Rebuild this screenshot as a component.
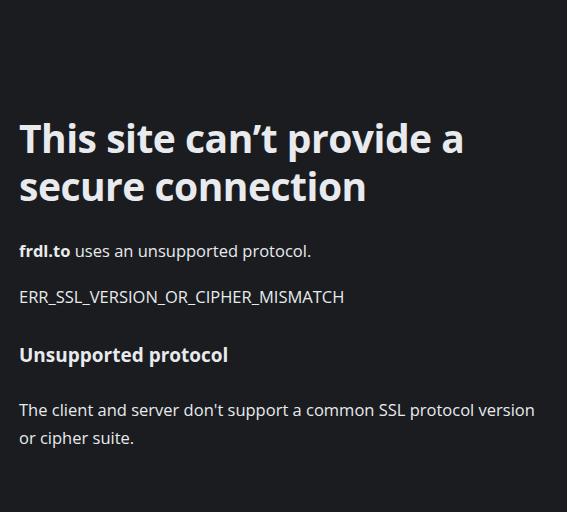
import React from 'react';

export default function App() {
  return (
    <div className="min-h-screen w-full bg-[#1a1c20] text-[#e8eaed] px-[19px] pt-[114px]" style={{ fontFamily: '"Open Sans", "Noto Sans", sans-serif' }}>
      <h1 className="text-[39px] leading-[48px] font-bold tracking-[-0.5px] max-w-[530px]">
        This site can’t provide a secure connection
      </h1>
      <p className="mt-[29px] text-[16.5px] leading-[24px]">
        <strong className="font-bold">frdl.to</strong> uses an unsupported protocol.
      </p>
      <p className="mt-[22px] text-[16.5px] leading-[24px]">ERR_SSL_VERSION_OR_CIPHER_MISMATCH</p>
      <h2 className="mt-[32px] text-[19px] leading-[28px] font-bold">Unsupported protocol</h2>
      <p className="mt-[27px] text-[16.5px] leading-[28px] max-w-[530px]">
        The client and server don't support a common SSL protocol version or cipher suite.
      </p>
    </div>
  );
}
